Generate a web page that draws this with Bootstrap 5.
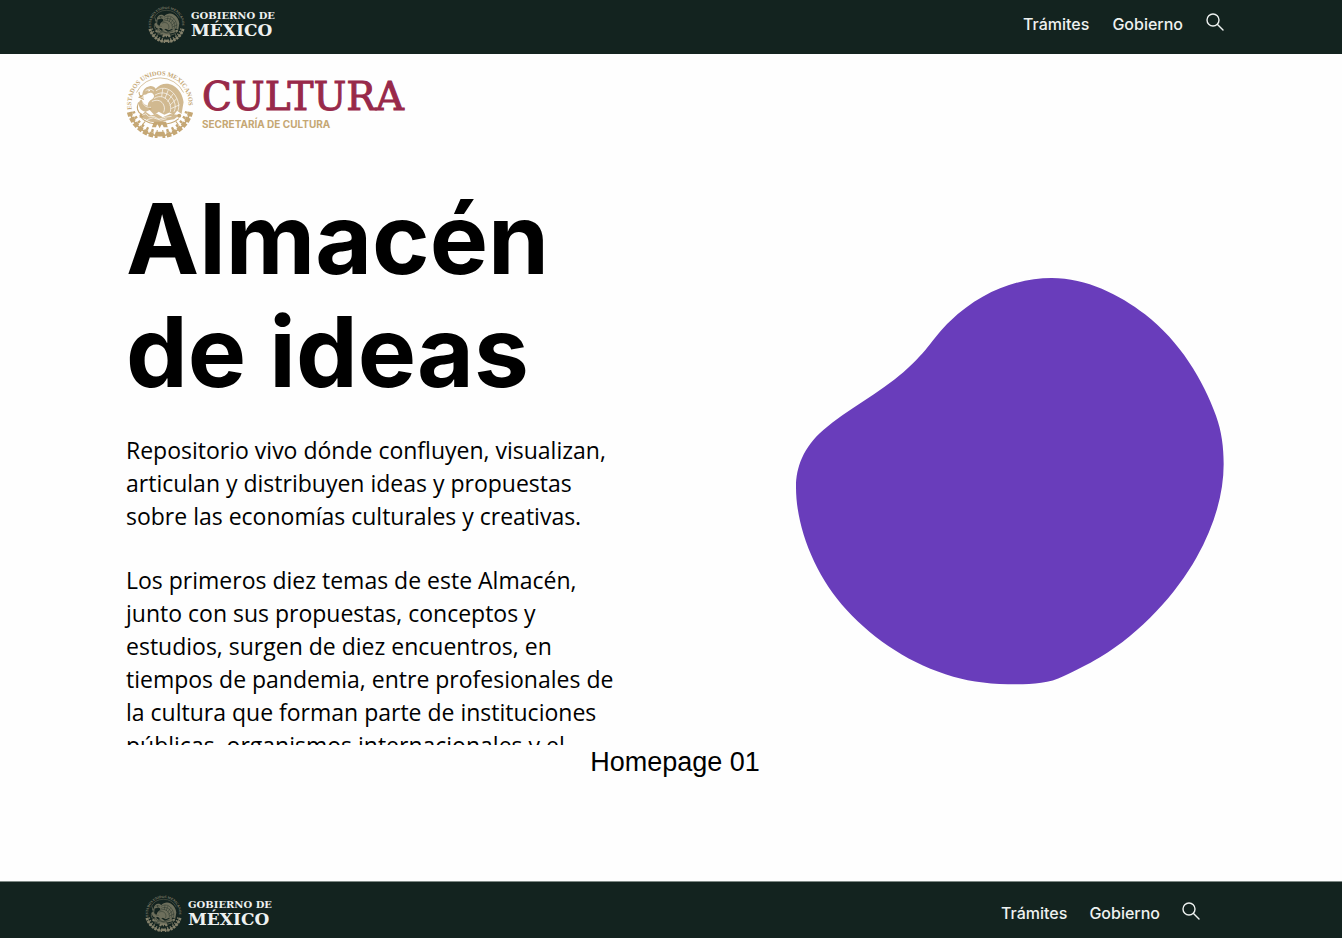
<!DOCTYPE html>
<html lang="es">
<head>
<meta charset="utf-8">
<meta name="viewport" content="width=device-width, initial-scale=1">
<title>Almacén de ideas</title>
<link href="https://cdn.jsdelivr.net/npm/bootstrap@5.3.0/dist/css/bootstrap.min.css" rel="stylesheet">
<style>
  body { font-family: "Open Sans", sans-serif; color: #000; background: #fefefe; }
  .gov-bar { background: #13231f; font-family: Inter, sans-serif; height: 54px; padding: 0 118px 6px 148px; }
  .gov-bar.bar-bottom { height: 57px; padding: 6px 142px 0 145px; border-top: 1px solid #7f8985; }
  .gov-bar a { color: #eef1f0; text-decoration: none; }
  .gov-nav { gap: 23px; font-size: 16px; line-height: 24px; font-weight: 500; }
  .bar-bottom .gov-nav { gap: 22px; }
  .gov-brand { gap: 6px; font-family: "DejaVu Serif", serif; font-weight: 700; }
  .gov-brand svg { color: #85826c; }
  .brand-top { font-size: 10px; line-height: 12px; }
  .brand-main { font-size: 17px; line-height: 16px; }
  .search-btn { background: none; border: 0; padding: 0 0 4px; color: #eef1f0; line-height: 0; }
  .page-area { padding: 16px 118px 0 126px; }
  .culture { gap: 8px; }
  .culture svg { color: #c5a774; }
  .culture-name { font-family: "DejaVu Serif", serif; font-size: 39px; line-height: 40px; color: #98294a; -webkit-text-stroke: 1px #98294a; }
  .culture-sub { font-family: Inter, sans-serif; font-weight: 700; font-size: 10px; line-height: 14px; color: #c5a774; }
  .hero { padding-top: 38px; }
  .hero-title { font-family: Inter, sans-serif; font-weight: 700; font-size: 98px; line-height: 113px; margin-bottom: 26px; }
  .hero-text { font-size: 23px; line-height: 33px; height: 311px; max-width: 500px; overflow-x: visible; overflow-y: clip; }
  .hero-text p { margin-bottom: 31px; }
  .blob-col { padding-top: 36px; }
  .blob { width: 428px; max-width: 100%; }
  .caption-line { font-family: "Liberation Sans", sans-serif; font-size: 27px; line-height: 34px; }
</style>
</head>
<body class="d-flex flex-column min-vh-100">
<svg width="0" height="0" class="position-absolute" aria-hidden="true">
  <defs>
    <path id="ring" d="M34 136A85 85 0 1 1 200 136"/>
    <symbol id="seal" viewBox="16 17 202 202">
      <text font-family="Liberation Serif, serif" font-weight="700" font-size="19" fill="currentColor"><textPath href="#ring" startOffset="2">ESTADOS UNIDOS MEXICANOS</textPath></text>
      <g fill="none" stroke="currentColor">
        <path d="M47 84A78 78 0 0 1 187 84" stroke-width="2"/>
        <path d="M28 143A92 92 0 0 0 206 143" stroke-width="5"/>
        <path d="M26 142A94 94 0 0 0 110 212M208 142A94 94 0 0 1 124 212" stroke-width="15" stroke-dasharray="13 5"/>
        <path d="M38 140A82 82 0 0 0 110 200M196 140A82 82 0 0 1 124 200" stroke-width="9" stroke-dasharray="7 9"/>
        <path d="M104 207h26" stroke-width="13"/>
      </g>
      <g fill="currentColor">
        <path opacity=".8" d="M65 91c-1-13 8-24 21-26 8-1 15 2 18 8 13-16 35-20 52-10 19 11 29 30 31 50l-6 35-13-10-10 13-13-8-15 7-17-9-13 10-15-17c-8-10-4-23 7-29 6-4 10-10 5-16-5-7-16-4-21 1z"/>
        <path opacity=".8" d="M62 105c-8 4-10 14-6 22 3 9 10 13 19 14l18-8-10-9c-10-1-17-8-21-19zM55 157l18-17 17 12 18-5 17 10 23-9 27 3-16 12-23 4-17 7-31-3-14-8z"/>
        <circle cx="62" cy="153" r="6"/><circle cx="174" cy="153" r="6"/>
        <path d="M99 171h36l5 16h-12l-5-10-7 13-7-13-4 10H93z"/>
      </g>
      <g fill="none" stroke="currentColor" stroke-width="3" stroke-linecap="round">
        <path d="M67 97c-8 0-13-6-12-14M67 91l-12 7 13 6M53 114c-6 15-3 28 9 34M63 161c24 22 82 24 109 1M72 171l-7 8M165 171l6 8"/>
      </g>
      <g fill="none" stroke="var(--seal-bg)" stroke-width="2" stroke-linecap="round">
        <path d="M106 78c20-15 48-5 61 23 5 11 8 25 4 36M103 91c22-14 46-3 56 19 5 12 4 23 0 30M100 101c18-11 35-3 44 12 6 10 5 19 4 27M94 110c17-8 29 0 34 11 4 9 2 16 0 21M125 74l-3 21M141 78l-9 23M156 88l-16 22M166 103l-19 18M174 121l-23 10M75 78c8-6 17-5 23 1M66 115c5 10 12 13 23 13M65 151l10-4 9 9 15-1 15 8 20-6 16-2M80 164l17-5 22 7 16-4"/>
        <circle cx="84" cy="78" r="2"/>
      </g>
    </symbol>
    <symbol id="lens" viewBox="0 0 18 18">
      <g fill="none" stroke="currentColor" stroke-width="1.4" stroke-linecap="round"><circle cx="7" cy="7" r="6"/><path d="M11.5 11.5L17 17"/></g>
    </symbol>
  </defs>
</svg>

<header class="gov-bar d-flex align-items-center justify-content-between">
  <a href="#" class="gov-brand d-flex align-items-center">
    <svg width="37" height="37" style="--seal-bg:#13231f" aria-hidden="true"><use href="#seal"/></svg>
    <span class="d-flex flex-column"><span class="brand-top">GOBIERNO DE</span><span class="brand-main">MÉXICO</span></span>
  </a>
  <nav class="gov-nav d-flex align-items-center" aria-label="Principal">
    <a href="#">Trámites</a>
    <a href="#">Gobierno</a>
    <button type="button" class="search-btn" aria-label="Buscar"><svg width="18" height="18"><use href="#lens"/></svg></button>
  </nav>
</header>

<main class="page-area">
  <a href="#" class="culture d-inline-flex align-items-center text-decoration-none">
    <svg width="68" height="68" style="--seal-bg:#fefefe" aria-hidden="true"><use href="#seal"/></svg>
    <span class="d-flex flex-column"><span class="culture-name">CULTURA</span><span class="culture-sub">SECRETARÍA DE CULTURA</span></span>
  </a>
  <div class="hero row g-0 justify-content-between">
    <div class="col-6">
      <h1 class="hero-title">Almacén<br>de ideas</h1>
      <div class="hero-text">
        <p>Repositorio vivo dónde confluyen, visualizan, articulan y distribuyen ideas y propuestas sobre las economías culturales y creativas.</p>
        <p>Los primeros diez temas de este Almacén, junto con sus propuestas, conceptos y estudios, surgen de diez encuentros, en tiempos de pandemia, entre profesionales de la cultura que forman parte de instituciones públicas, organismos internacionales y el</p>
      </div>
    </div>
    <div class="blob-col col-6 d-flex justify-content-end align-items-center">
      <svg class="blob" viewBox="48 52 1284 1219" aria-hidden="true"><path fill="#693dbb" d="M815 52C920 52 1018 102 1095 161C1200 242 1270 360 1308 465C1325 512 1331 560 1331 610C1331 700 1303 795 1250 890C1188 1000 1085 1115 960 1190C920 1214 890 1228 850 1247C810 1268 760 1271 710 1271C640 1271 575 1264 520 1248C395 1212 285 1140 200 1048C105 945 48 800 48 680C48 620 70 560 130 508C200 448 300 396 370 335C450 265 460 228 510 182C600 95 710 52 815 52Z"/></svg>
    </div>
  </div>
</main>
<p class="caption-line text-center mb-0 ps-2">Homepage 01</p>

<footer class="gov-bar bar-bottom d-flex align-items-center justify-content-between mt-auto">
  <a href="#" class="gov-brand d-flex align-items-center">
    <svg width="37" height="37" style="--seal-bg:#13231f" aria-hidden="true"><use href="#seal"/></svg>
    <span class="d-flex flex-column"><span class="brand-top">GOBIERNO DE</span><span class="brand-main">MÉXICO</span></span>
  </a>
  <nav class="gov-nav d-flex align-items-center" aria-label="Secundaria">
    <a href="#">Trámites</a>
    <a href="#">Gobierno</a>
    <button type="button" class="search-btn" aria-label="Buscar"><svg width="18" height="18"><use href="#lens"/></svg></button>
  </nav>
</footer>
<script src="https://cdn.jsdelivr.net/npm/bootstrap@5.3.0/dist/js/bootstrap.bundle.min.js"></script>
</body>
</html>
